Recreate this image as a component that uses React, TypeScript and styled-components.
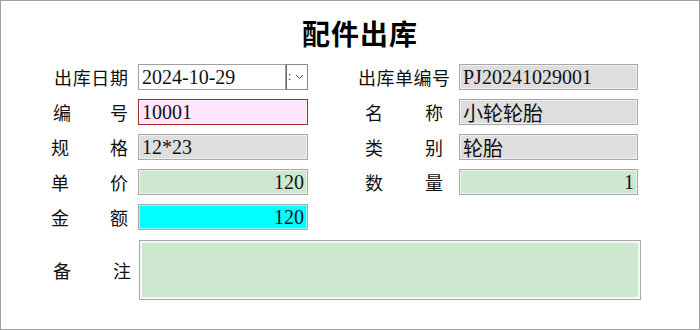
import React from "react";
import styled, { createGlobalStyle } from "styled-components";

const GlobalStyle = createGlobalStyle`
  html, body {
    margin: 0;
    padding: 0;
    background: #fff;
  }
  body {
    font-family: "Liberation Serif", "Noto Sans CJK SC", serif;
  }
`;

type Tone = "white" | "pink" | "gray" | "green" | "cyan";

const tones: Record<Tone, { bg: string; border: string }> = {
  white: { bg: "#ffffff", border: "#a0a0a0" },
  pink: { bg: "#ffe6fb", border: "#a52a2a" },
  gray: { bg: "#dedede", border: "#a8a8a8" },
  green: { bg: "#cee8d0", border: "#a8a8a8" },
  cyan: { bg: "#00ffff", border: "#a8a8a8" },
};

const Frame = styled.div`
  box-sizing: border-box;
  width: 700px;
  height: 330px;
  border: 1px solid #a0a0a0;
  display: flex;
  flex-direction: column;
`;

const Title = styled.h1`
  margin: 0;
  height: 63px;
  padding: 0 0 0 20px;
  display: flex;
  align-items: center;
  justify-content: center;
  font-family: "Noto Sans CJK SC", serif;
  font-size: 28px;
  font-weight: 700;
  letter-spacing: 1px;
  color: #000;
`;

const Grid = styled.div`
  display: grid;
  grid-template-columns: 77px 170px 92px 179px;
  grid-auto-rows: 26px;
  column-gap: 10px;
  row-gap: 9px;
  padding-left: 50px;
  align-items: center;
`;

const Label = styled.div<{ $inset?: number; $start?: number }>`
  display: flex;
  justify-content: space-between;
  align-items: center;
  height: 100%;
  padding-left: ${(p) => p.$inset ?? 0}px;
  padding-right: ${(p) => p.$inset ?? 0}px;
  margin-left: ${(p) => p.$start ?? 0}px;
  font-family: "Noto Sans CJK SC", serif;
  font-size: 18px;
  color: #111;
  white-space: nowrap;
`;

const RightLabel = styled(Label)`
  margin-left: 40px;
  margin-right: -40px;
`;

const Field = styled.div<{ $tone: Tone; $right?: boolean }>`
  box-sizing: border-box;
  height: 26px;
  border: 1px solid ${(p) => tones[p.$tone].border};
  box-shadow: inset 0 0 0 1px ${(p) => (p.$tone === "white" ? "#fff" : "rgba(255,255,255,0.55)")};
  background: ${(p) => tones[p.$tone].bg};
  display: flex;
  align-items: center;
  justify-content: ${(p) => (p.$right ? "flex-end" : "flex-start")};
  padding: 0 3px;
  font-size: 20px;
  color: #111;
  white-space: nowrap;
  overflow: hidden;
`;

const RightField = styled(Field)`
  margin-left: 39px;
  margin-right: -39px;
`;

const DateWrap = styled.div`
  display: flex;
  height: 26px;
`;

const DateField = styled(Field)`
  flex: 1;
`;

const DropButton = styled.div`
  box-sizing: border-box;
  width: 22px;
  height: 26px;
  border: 1px solid #8a8a8a;
  border-left-color: #666;
  background: #fff;
  display: flex;
  align-items: center;
  justify-content: center;
  position: relative;
  font-size: 12px;
  color: #555;
`;

const Colon = styled.span`
  position: absolute;
  left: 1px;
  top: 4px;
  font-size: 12px;
  color: #333;
`;

const NoteRow = styled.div`
  display: grid;
  grid-template-columns: 80px 502px;
  column-gap: 8px;
  padding-left: 50px;
  margin-top: 10px;
  align-items: center;
`;

const NoteLabel = styled(Label)`
  height: auto;
  padding-left: 2px;
  padding-right: 0;
`;

const NoteBox = styled.div`
  box-sizing: border-box;
  height: 60px;
  border: 1px solid #a8a8a8;
  box-shadow: inset 0 0 0 2px #f4faf4;
  background: #cee8d0;
`;

const Chevron = () => (
  <svg width="9" height="6" viewBox="0 0 9 6" style={{ marginLeft: 4 }}>
    <path d="M1 1 L4.5 4.5 L8 1" fill="none" stroke="#444" strokeWidth="1" />
  </svg>
);

export default function App() {
  return (
    <>
      <GlobalStyle />
      <Frame>
        <Title>配件出库</Title>
        <Grid>
          <Label $start={3}>
            <span>出</span><span>库</span><span>日</span><span>期</span>
          </Label>
          <DateWrap>
            <DateField $tone="white">2024-10-29</DateField>
            <DropButton>
              <Colon>:</Colon>
              <Chevron />
            </DropButton>
          </DateWrap>
          <RightLabel>
            <span>出</span><span>库</span><span>单</span><span>编</span><span>号</span>
          </RightLabel>
          <RightField $tone="gray">PJ20241029001</RightField>

          <Label $start={2}>
            <span>编</span><span>号</span>
          </Label>
          <Field $tone="pink">10001</Field>
          <RightLabel $inset={7}>
            <span>名</span><span>称</span>
          </RightLabel>
          <RightField $tone="gray">小轮轮胎</RightField>

          <Label>
            <span>规</span><span>格</span>
          </Label>
          <Field $tone="gray">12*23</Field>
          <RightLabel $inset={7}>
            <span>类</span><span>别</span>
          </RightLabel>
          <RightField $tone="gray">轮胎</RightField>

          <Label $inset={-3}>
            <span>单</span><span>价</span>
          </Label>
          <Field $tone="green" $right>120</Field>
          <RightLabel $inset={7}>
            <span>数</span><span>量</span>
          </RightLabel>
          <RightField $tone="green" $right>1</RightField>

          <Label $inset={-1}>
            <span>金</span><span>额</span>
          </Label>
          <Field $tone="cyan" $right>120</Field>
        </Grid>
        <NoteRow>
          <NoteLabel>
            <span>备</span><span>注</span>
          </NoteLabel>
          <NoteBox />
        </NoteRow>
      </Frame>
    </>
  );
}
